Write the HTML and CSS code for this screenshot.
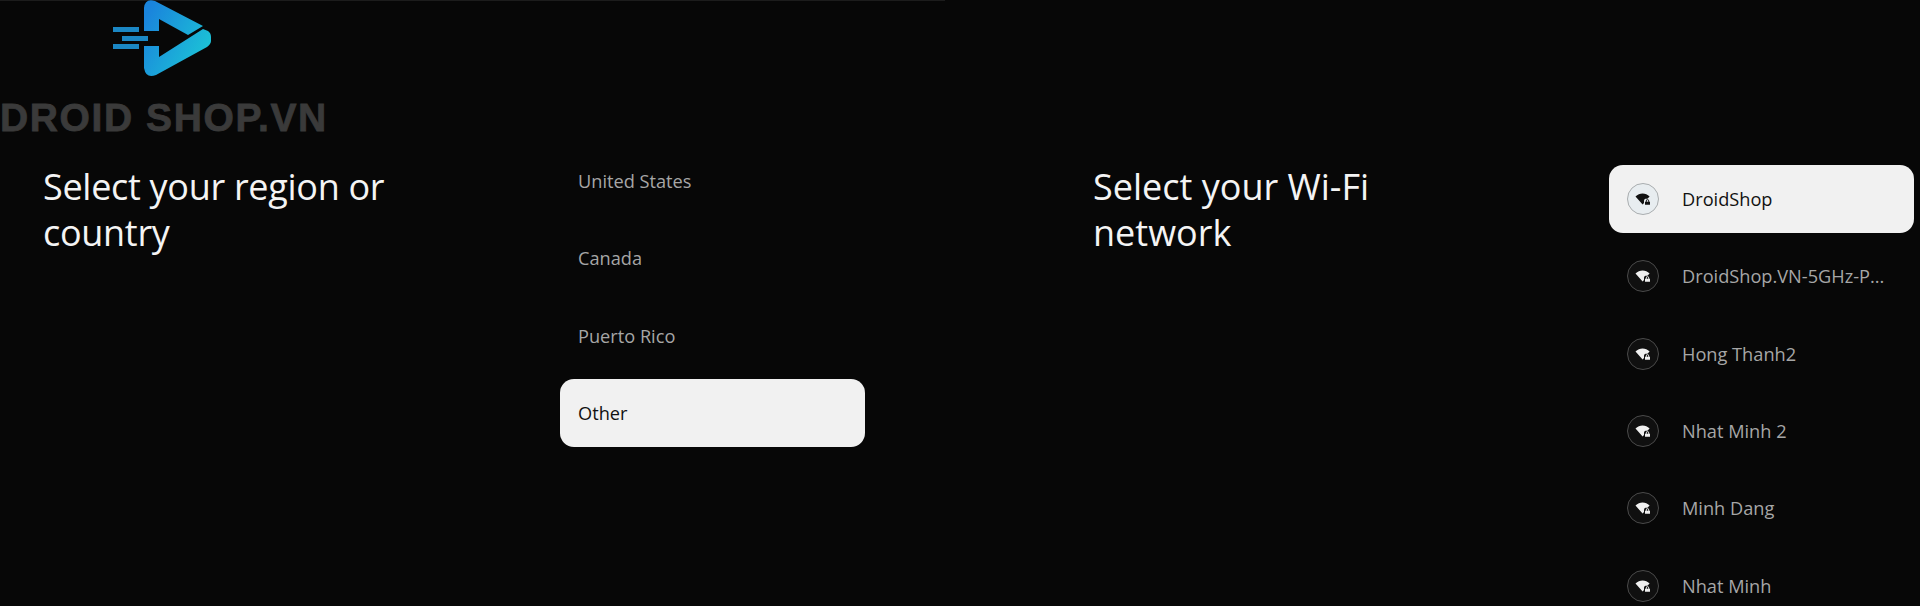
FILE: index.html
```html
<!DOCTYPE html>
<html>
  <head>
    <title>Android TV setup</title>
    <meta name="viewport" content="width=device-width, initial-scale=1" />
    <link rel="stylesheet" href="styles.css">
  </head>
  <body>
    <svg width="0" height="0" class="defs">
      <symbol id="wifi-lock" viewBox="0 0 16 16">
        <path d="M0.5 5.6C2.6 3.6 5 2.6 7.6 2.6c2.6 0 5 1 7 2.9l-2.2 2.3H10.6c-1 .3-1.6 1.1-1.6 2.1v2.2L7.6 13.6z" />
        <path d="M10 13.8v-3h.8V9.900a1.700 1.700 0 0 1 3.400 0v.9h.8v3zM11.700 10.800h1.600V9.900a.8.8 0 0 0-1.600 0z" />
      </symbol>
    </svg>

    <div class="logo">
      <svg class="logo-mark" width="220" height="80" viewBox="0 0 220 80">
        <defs>
          <linearGradient id="logo-grad" gradientUnits="userSpaceOnUse" x1="144" y1="20" x2="211" y2="55">
            <stop offset="0" stop-color="#1a84dc" />
            <stop offset="1" stop-color="#1cc6d6" />
          </linearGradient>
        </defs>
        <path fill="url(#logo-grad)" d="M144 8Q145 -2 155 1L203 26L188 35L159 19V31H144z" />
        <path fill="url(#logo-grad)" d="M144 46H159V57L203 29L208 31Q211 33 211 37V41Q211 44 207 47L156 75Q146 79 144 68z" />
        <rect x="113" y="27" width="26" height="5" fill="#1b87c4" />
        <rect x="122" y="36" width="26" height="5" fill="#1b87c4" />
        <rect x="113" y="44" width="26" height="5" fill="#1b87c4" />
      </svg>
      <div class="logo-text">DROID SHOP.VN</div>
    </div>

    <div class="screens">
      <section class="pane pane-region">
        <h1 class="pane-title">Select your region or country</h1>
        <ul class="options">
          <li class="option">United States</li>
          <li class="option">Canada</li>
          <li class="option">Puerto Rico</li>
          <li class="option selected">Other</li>
        </ul>
      </section>

      <section class="pane pane-wifi">
        <h1 class="pane-title">Select your Wi-Fi network</h1>
        <ul class="options">
          <li class="option selected">
            <span class="wifi-icon"><svg width="16" height="16"><use href="#wifi-lock" /></svg></span>
            <span class="network-name">DroidShop</span>
          </li>
          <li class="option">
            <span class="wifi-icon"><svg width="16" height="16"><use href="#wifi-lock" /></svg></span>
            <span class="network-name">DroidShop.VN-5GHz-P...</span>
          </li>
          <li class="option">
            <span class="wifi-icon"><svg width="16" height="16"><use href="#wifi-lock" /></svg></span>
            <span class="network-name">Hong Thanh2</span>
          </li>
          <li class="option">
            <span class="wifi-icon"><svg width="16" height="16"><use href="#wifi-lock" /></svg></span>
            <span class="network-name">Nhat Minh 2</span>
          </li>
          <li class="option">
            <span class="wifi-icon"><svg width="16" height="16"><use href="#wifi-lock" /></svg></span>
            <span class="network-name">Minh Dang</span>
          </li>
          <li class="option">
            <span class="wifi-icon"><svg width="16" height="16"><use href="#wifi-lock" /></svg></span>
            <span class="network-name">Nhat Minh</span>
          </li>
        </ul>
      </section>
    </div>
  </body>
</html>
```

FILE: styles.css
```css
* {
  box-sizing: border-box;
}

html, body {
  height: 100%;
}

body {
  margin: 0;
  overflow: hidden;
  background-color: #070707;
  font-family: "Open Sans", "Noto Sans", sans-serif;
  color: #f2f2f2;
}

.defs {
  position: absolute;
}

/* watermark sits over the screenshots */
.logo {
  position: absolute;
  top: 0;
  left: 0;
  width: 340px;
  height: 140px;
}

.logo-mark {
  display: block;
}

.logo-text {
  position: absolute;
  top: 96px;
  left: 0;
  font-family: "Liberation Sans", sans-serif;
  font-size: 39px;
  line-height: 44px;
  font-weight: 700;
  letter-spacing: 1.6px;
  white-space: nowrap;
  color: #3a3a3a;
  -webkit-text-stroke: 0.8px #3a3a3a;
}

.screens {
  display: flex;
  gap: 105px;
  height: 606px;
  overflow: hidden;
}

.pane {
  display: flex;
  height: 606px;
}

.pane-region {
  width: 945px;
  border-top: 1px solid #1c1c1c;
  padding-top: 146px;
}

.pane-wifi {
  flex: 1;
  padding-top: 165px;
}

.pane-title {
  width: 560px;
  margin: 0;
  padding: 0 150px 0 43px;
  font-size: 36px;
  line-height: 46px;
  font-weight: 400;
  color: #f4f4f4;
}

.pane-region .pane-title {
  padding-top: 17px;
  letter-spacing: -0.3px;
}

.pane-wifi .pane-title {
  margin-top: -1px;
}

.pane-wifi .options {
  margin-left: -1px;
}

.options {
  display: flex;
  flex-direction: column;
  gap: 9.33px;
  width: 305px;
  margin: 0;
  padding: 0;
  list-style: none;
}

.option {
  display: flex;
  flex: none;
  align-items: center;
  gap: 23px;
  height: 68px;
  padding: 0 18px;
  border-radius: 14px;
  font-size: 18.2px;
  color: #a6a6a6;
}

.option.selected {
  background-color: #f1f1f1;
  color: #111;
}

.network-name {
  white-space: nowrap;
}

.wifi-icon {
  display: flex;
  flex: none;
  align-items: center;
  justify-content: center;
  width: 32px;
  height: 32px;
  border: 1.5px solid #4a4a4a;
  border-radius: 50%;
  background-color: #101010;
  fill: #f0f0f0;
}

.selected .wifi-icon {
  border-color: #a9adaf;
  background-color: #e8edf0;
  fill: #111;
}
```
